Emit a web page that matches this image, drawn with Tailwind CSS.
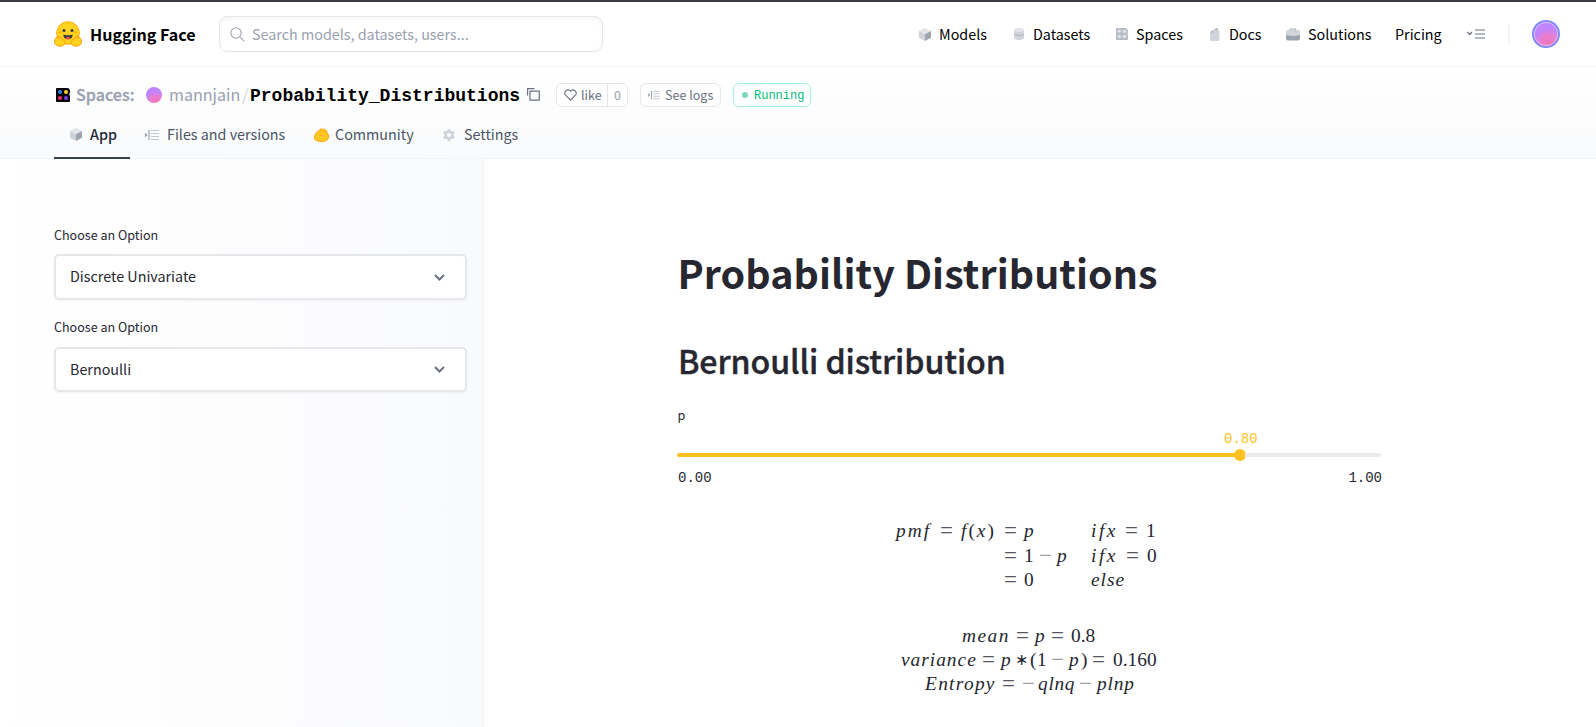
<!DOCTYPE html>
<html lang="en">
<head>
<meta charset="utf-8">
<title>Probability_Distributions - Hugging Face Space</title>
<script src="https://cdn.jsdelivr.net/npm/@tailwindcss/browser@4"></script>
</head>
<body class="w-[1596px] h-[727px] overflow-hidden bg-white font-['Noto_Sans_CJK_SC','Noto_Sans',sans-serif] text-[14.33px] leading-6 text-[#262730]">
<svg class="absolute h-0 w-0">
  <defs>
    <symbol id="cube" viewBox="0 0 12 13"><path d="M6 0 12 3 6 6.3 0 3Z" fill="#e3e5e9"/><path d="M0 3 6 6.3V13L0 9.8Z" fill="#cfd2d9"/><path d="M12 3 6 6.3V13L12 9.8Z" fill="#9da3af"/></symbol>
    <symbol id="files" viewBox="0 0 14 12"><path d="M0 3.5 2.6 6 0 8.5Z" fill="#9ca3af"/><path d="M4 1v10" stroke="#9ca3af" stroke-width="1.2"/><path d="M6 1.5h8M6 4.5h8M6 7.5h8M6 10.5h8" stroke="#c3c7ce" stroke-width="1.2"/></symbol>
    <radialGradient id="ball" cx=".6" cy=".9" r=".8"><stop offset="0" stop-color="#f472b6"/><stop offset=".45" stop-color="#e87fd0"/><stop offset=".75" stop-color="#c084fc"/></radialGradient>
  </defs>
</svg>
<div class="h-[2px] bg-[#3b3842]"></div>
<header class="flex h-[65px] items-center border-b border-gray-100 pl-[54px] text-black">
  <svg class="h-[26px] w-[28px] shrink-0" viewBox="0 0 28 26">
    <circle cx="14" cy="12" r="11.3" fill="#ffd21e" stroke="#ffac03" stroke-width="1"/>
    <path d="M9.500 13.300c1.500 1.300 7.500 1.300 9 0 .4 3.500-1.800 5-4.500 5s-4.900-1.500-4.500-5Z" fill="#3a3b45"/><path d="M11.500 17.200c1-1.600 4-1.600 5 0-1.300 1.400-3.700 1.400-5 0Z" fill="#ef4e4e"/>
    <circle cx="10" cy="9.600" r="1.500" fill="#3a3b45"/><circle cx="18" cy="9.600" r="1.500" fill="#3a3b45"/>
    <circle cx="6.300" cy="11.300" r="1" fill="#ffac03"/><circle cx="21.700" cy="11.300" r="1" fill="#ffac03"/>
    <path d="M2 17c1-2 2 0 3 1l-.5-2c1-2 2.500 0 3.500 2 2 1 4 3 2.500 5.500-2 2.500-7 2-9 0-1.500-2-1.500-4 .5-6.500ZM26 17c-1-2-2 0-3 1l.5-2c-1-2-2.500 0-3.500 2-2 1-4 3-2.500 5.500 2 2.500 7 2 9 0 1.500-2 1.500-4-.5-6.500Z" fill="#ffd21e" stroke="#ff9d0b" stroke-width="1"/>
  </svg>
  <span class="ml-2 w-[129px] shrink-0 whitespace-nowrap pb-px text-[16.1px] font-bold">Hugging Face</span>
  <div class="flex h-9 w-[384px] shrink-0 items-center rounded-lg border border-gray-200 pl-[10px] text-gray-400 shadow-[inset_0_2px_4px_rgba(0,0,0,0.05)]">
    <svg class="mr-[7px] h-[15px] w-[15px]" viewBox="0 0 15 15" fill="none" stroke="#9ca3af" stroke-width="1.100"><circle cx="6" cy="6" r="5.200"/><path d="m9.800 9.800 4.500 4.500"/></svg>
    <span>Search models, datasets, users...</span>
  </div>
  <nav class="ml-[316px] flex shrink-0 items-center whitespace-nowrap">
    <a class="flex w-[95px] items-center"><svg class="mr-2 h-[13px] w-3"><use href="#cube"/></svg>Models</a>
    <a class="flex w-[102px] items-center"><svg class="mr-[9px] h-3 w-[10px]" viewBox="0 0 10 12"><path d="M0 2v8c0 2.500 10 2.500 10 0V2Z" fill="#d1d5db"/><path d="M0 6c0 1.800 10 1.800 10 0" fill="none" stroke="#aab0ba"/><ellipse cx="5" cy="2" rx="5" ry="2" fill="#e2e4e8"/></svg>Datasets</a>
    <a class="flex w-[94px] items-center"><svg class="mr-2 h-3 w-3" viewBox="0 0 12 12"><path d="M0 1Q0 0 1 0H9.500Q12 .5 12 3L11.500 6 12 7V11Q12 12 11 12H1Q0 12 0 11Z" fill="#b5bac4"/><g fill="#dfe2e7"><circle cx="3.300" cy="3.300" r="1.800"/><circle cx="8.500" cy="3.300" r="1.800"/><circle cx="3.300" cy="8.600" r="1.800"/><circle cx="8.500" cy="8.600" r="1.800"/></g></svg>Spaces</a>
    <a class="flex w-[76px] items-center"><svg class="mr-[9px] h-[13px] w-[10px]" viewBox="0 0 10 13"><path d="M2 3 7 0l1 2v2H2Z" fill="#9ca3af"/><path d="M0 4.500 3 2h5q1.500 0 1.500 1.500V11q0 2-1.500 2H1.500Q0 13 0 11Z" fill="#d1d5db"/><path d="M0 4.500 3 2v2.500Z" fill="#aab0ba"/></svg>Docs</a>
    <a class="flex w-[109px] items-center"><svg class="mr-2 h-[13px] w-[14px]" viewBox="0 0 14 13"><path d="M4.500 3V1h5v2" fill="none" stroke="#aab0ba" stroke-width="1.200"/><rect y="2.500" width="14" height="10" rx="2" fill="#9ca3af"/><path d="M0 4.500q0-2 2-2h10q2 0 2 2V7q-7 2-14 0Z" fill="#d1d5db"/></svg>Solutions</a>
    <a class="w-[72px]">Pricing</a>
    <svg class="h-[10px] w-[18px]" viewBox="0 0 18 10" fill="none" stroke="#6b7280"><path d="m.5 3 2.300 2.500L5 3" stroke-width="1.200"/><path d="M8 1h10M8 5h10M8 9h10" stroke-width="1.200"/></svg>
    <span class="ml-[23px] h-5 w-[2px] bg-gray-100"></span>
    <svg class="ml-[22px] h-7 w-7" viewBox="0 0 28 28"><circle cx="14" cy="14" r="13" fill="url(#ball)" stroke="#818cf8" stroke-width="2"/><circle cx="14" cy="14" r="11.600" fill="none" stroke="#e9d5ff" stroke-width=".7"/></svg>
  </nav>
</header>
<section class="h-[92px] border-b border-gray-100 bg-linear-to-b from-white to-gray-50 pl-[54px]">
  <div class="flex h-10 items-center whitespace-nowrap pt-4 text-[16.1px] text-gray-400">
    <svg class="ml-[2px] mr-[5px] h-[14px] w-[14px]" viewBox="0 0 14 14"><path d="M0 1q0-1 1-1h10q3 0 3 3.500L13.300 7l.7 1v5q0 1-1 1H1q-1 0-1-1Z" fill="#000"/><circle cx="4" cy="4" r="2" fill="#2587e8"/><circle cx="10" cy="4" r="2" fill="#ffd21e"/><circle cx="4" cy="10" r="2" fill="#ef2f6b"/><circle cx="10" cy="10" r="2" fill="#7b3ff2"/></svg>
    <span class="w-[71px] pb-[2px] pl-px font-medium [-webkit-text-stroke:0.3px]">Spaces:</span>
    <svg class="mr-[6px] h-4 w-4" viewBox="0 0 16 16"><circle cx="8" cy="8" r="8" fill="url(#ball)"/></svg>
    <span class="w-[74px] pb-[2px] pl-px">mannjain</span>
    <span class="w-[8px] pb-[2px] text-gray-300">/</span>
    <h1 class="w-[277px] pt-px font-['Liberation_Mono',monospace] text-[18px] font-bold text-black">Probability_Distributions</h1>
    <svg class="mb-[2px] h-[13px] w-[13px]" viewBox="0 0 13 13" fill="none" stroke="#6b7280" stroke-width="1.200"><path d="M3 3.200h9.300v9H3ZM.6 7.500V.6H7.500"/></svg>
    <div class="ml-4 flex h-6 w-[72px] items-center rounded-md border border-gray-200 bg-white text-[12.54px] text-gray-500">
      <svg class="ml-[7px] mr-[4px] h-3 w-[13px]" viewBox="0 0 13 12" fill="none" stroke="#6b7280" stroke-width="1.100"><path d="M6.500 11.200 1.400 6C-.7 3.200 3.500-1.300 6.500 2.200 9.500-1.300 13.700 3.200 11.600 6Z"/></svg>
      <span class="w-[26px]">like</span><span class="flex h-full flex-1 items-center justify-center border-l border-gray-200 text-gray-400">0</span>
    </div>
    <div class="ml-3 flex h-6 w-[81px] items-center rounded-md border border-gray-200 bg-white pl-[7px] text-[12.54px] text-gray-500">
      <svg class="mr-[5px] h-[10px] w-3" ><use href="#files"/></svg>See logs
    </div>
    <div class="ml-3 flex h-6 w-[78px] items-center rounded-md border border-emerald-200 bg-white pl-2 font-['Liberation_Mono',monospace] text-[12px] text-emerald-500">
      <span class="mr-[6px] h-[6px] w-[6px] rounded-full bg-[#7fd9b8]"></span><span class="pt-[2px]">Running</span>
    </div>
  </div>
  <div class="mt-3 flex h-[40px] whitespace-nowrap text-gray-600">
    <a class="flex h-[40px] w-[76px] items-center border-b-2 border-gray-700 pl-4 pb-[7px] font-medium text-gray-800"><svg class="mr-2 h-[13px] w-3"><use href="#cube"/></svg><span class="pb-px">App</span></a>
    <a class="ml-[15px] flex h-[31px] w-[169px] items-center"><svg class="mr-[7px] h-3 w-[14px]"><use href="#files"/></svg><span class="pb-px pl-px">Files and versions</span></a>
    <a class="flex h-[31px] w-[129px] items-center"><svg class="mr-[6px] h-[14px] w-[15px]" viewBox="0 0 15 14"><path d="M2 5 6 1.500Q7.500 0 8.500 1.500 10-.2 11 2q2 0 2 2.500Q16 8 14 11q-1.500 2.500-6 2.500T1.500 12Q-1 10 2 5Z" fill="#ffc824" stroke="#ff9d0b" stroke-width=".9"/><path d="m6 4 2-2M8.500 5 11 2.500M10.500 7 13 5M5 8q2-2 4 0" stroke="#ff9d0b" stroke-width=".8" fill="none"/></svg><span class="pb-px">Community</span></a>
    <a class="flex h-[31px] items-center"><svg class="mr-[9px] h-3 w-3" viewBox="0 0 12 12"><circle cx="6" cy="6" r="3.400" fill="none" stroke="#cfd2da" stroke-width="2.600"/><path d="M6 0v2M6 10v2M.8 3l1.800 1M9.400 8l1.800 1M.8 9l1.800-1M9.400 4l1.800-1" stroke="#cfd2da" stroke-width="2.800"/></svg><span class="pb-px">Settings</span></a>
  </div>
</section>
<main class="flex h-[568px]">
  <aside class="w-[484px] border-r border-gray-100 bg-linear-to-r from-white to-[#f9fafc] pl-[54px] pt-[65px]">
    <label class="block h-[30px] text-[12.54px] leading-[22px]">Choose an Option</label>
    <div class="flex h-[46px] w-[413px] items-center justify-between rounded-[5px] border-2 border-gray-200 bg-white pl-[14px] pr-[20px] shadow-xs"><span class="pb-[2px]">Discrete Univariate</span><svg class="h-[7px] w-[11px]" viewBox="0 0 11 7" fill="none" stroke="#6b7280" stroke-width="2"><path d="m1 1 4.500 4.500L10 1"/></svg></div>
    <label class="mt-[16px] block h-[31px] text-[12.54px] leading-[22px]">Choose an Option</label>
    <div class="flex h-[45px] w-[413px] items-center justify-between rounded-[5px] border-2 border-gray-200 bg-white pl-[14px] pr-[20px] shadow-xs"><span class="pb-[2px]">Bernoulli</span><svg class="h-[7px] w-[11px]" viewBox="0 0 11 7" fill="none" stroke="#6b7280" stroke-width="2"><path d="m1 1 4.500 4.500L10 1"/></svg></div>
  </aside>
  <div class="ml-[193px] w-[705px] whitespace-nowrap pt-[86px]">
    <h1 class="h-[94px] pl-[0.5px] text-[39.4px] font-bold leading-[53px] tracking-[0.07px]">Probability Distributions</h1>
    <h2 class="h-[65px] pl-px text-[32.2px] font-medium leading-[43px] tracking-[-0.1px] [-webkit-text-stroke:0.4px]">Bernoulli distribution</h2>
    <p class="h-[21px] pl-[0.5px] text-[12.54px] leading-[22px]">p</p>
    <div class="h-[74px] w-[705px] font-['Liberation_Mono',monospace] text-[14px] leading-[20px]">
      <div class="ml-[547px] h-[21px] pt-[5px] leading-[18px] text-[#ffc022]">0.80</div>
      <div class="mt-[3px] flex h-3 w-[704px] items-center">
        <div class="h-1 w-[558px] rounded-l bg-[#ffc022]"></div>
        <div class="-mx-px h-3 w-3 rounded-full bg-[#ffc022]"></div>
        <div class="h-1 flex-1 rounded-r bg-[#eaeaeb]"></div>
      </div>
      <div class="mt-[7px] flex justify-between pl-px"><span>0.00</span><span>1.00</span></div>
    </div>
    <div class="mt-[20px] pl-px font-['Liberation_Serif',serif] text-[19.36px] leading-6">
      <div class="flex h-6 pl-[218px]"><i class="w-[44px] tracking-[2px]">pmf</i><span class="w-[21px] text-[23px] text-[#55565e]">=</span><span class="w-[43px] tracking-[2px]"><i>f</i>(<i>x</i>)</span><span class="w-[20px] text-[23px] text-[#55565e]">=</span><i class="w-[67px]">p</i><i class="w-[34px] tracking-[2.5px]">ifx</i><span class="w-[21px] text-[23px] text-[#55565e]">=</span><span>1</span></div>
      <div class="flex h-[25px] pl-[326px] pt-px"><span class="w-[20px] text-[23px] text-[#55565e]">=</span><span class="w-[15px]">1</span><span class="w-[18px] text-[23px] text-[#a0a0a8]">−</span><i class="w-[34px]">p</i><i class="w-[35px] tracking-[2.5px]">ifx</i><span class="w-[21px] text-[23px] text-[#55565e]">=</span><span>0</span></div>
      <div class="flex h-6 pl-[326px]"><span class="w-[20px] text-[23px] text-[#55565e]">=</span><span class="w-[67px]">0</span><i class="tracking-[1px]">else</i></div>
      <div class="mt-8 flex h-6 pl-[284px]"><i class="w-[54px] tracking-[1.5px]">mean</i><span class="w-[19px] text-[23px] text-[#55565e]">=</span><i class="w-[16px]">p</i><span class="w-[20px] text-[23px] text-[#55565e]">=</span><span>0.8</span></div>
      <div class="flex h-6 pl-[223px]"><i class="w-[81px] tracking-[1px]">variance</i><span class="w-[19px] text-[23px] text-[#55565e]">=</span><i class="w-[14px]">p</i><span class="w-[15px] text-[16px]">∗</span><span class="w-[7px]">(</span><span class="w-[14px]">1</span><span class="w-[18px] text-[23px] text-[#a0a0a8]">−</span><i class="w-[12px]">p</i><span class="w-[11px]">)</span><span class="w-[21px] text-[23px] text-[#55565e]">=</span><span>0.160</span></div>
      <div class="flex h-6 pl-[247px]"><i class="w-[77px] tracking-[1.3px]">Entropy</i><span class="w-[20px] text-[23px] text-[#55565e]">=</span><span class="w-[16px] text-[23px] text-[#a0a0a8]">−</span><i class="w-[41px] tracking-[.7px]">qlnq</i><span class="w-[18px] text-[23px] text-[#a0a0a8]">−</span><i class="tracking-[.8px]">plnp</i></div>
    </div>
  </div>
</main>
</body>
</html>
